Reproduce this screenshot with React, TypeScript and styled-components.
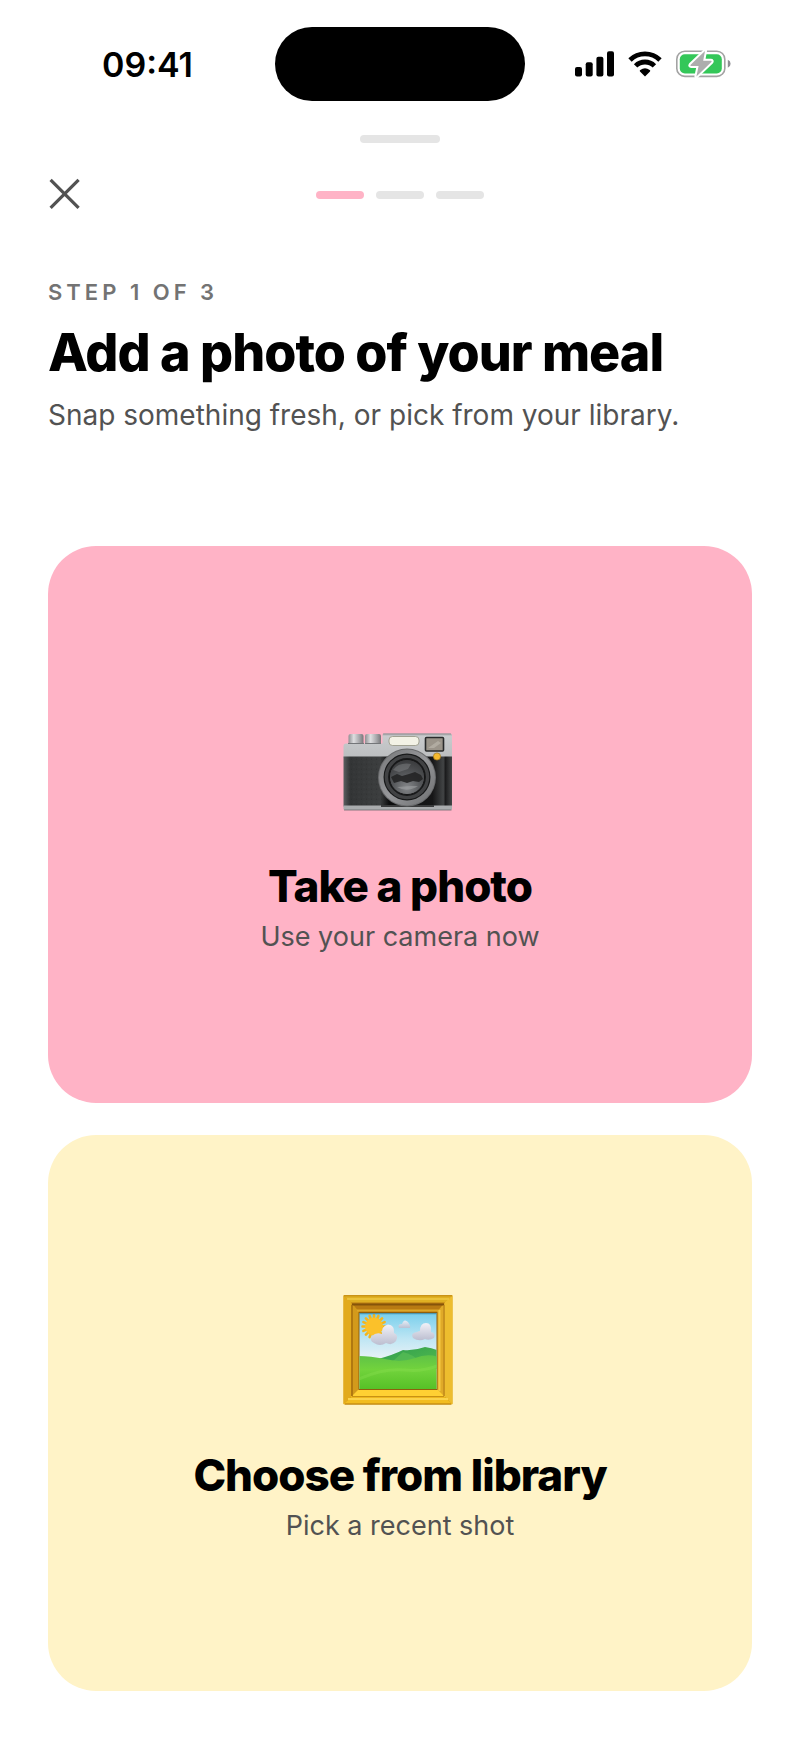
import React from "react";
import styled, { createGlobalStyle } from "styled-components";

const GlobalStyle = createGlobalStyle`
    * {
        box-sizing: border-box;
    }
    body {
        margin: 0;
        background-color: #fff;
        color: #000;
        font-family: Inter, "Liberation Sans", sans-serif;
    }
`;
const Screen = styled.div`
    display: flex;
    flex-direction: column;
    min-height: 100vh;
    padding: 27px 0 48px;
`;
const StatusBar = styled.div`
    display: grid;
    grid-template-columns: 1fr 250px 1fr;
    align-items: center;
    justify-items: center;
    padding: 0 20px;
`;
const Time = styled.time`
    padding-top: 2px;
    font-size: 34px;
    line-height: 40px;
    font-weight: 600;
`;
const Island = styled.div`
    width: 250px;
    height: 74px;
    border-radius: 37px;
    background-color: #000;
`;
const StatusIcons = styled.div`
    display: flex;
    align-items: center;
    gap: 14px;
    svg {
        display: block;
    }
`;
const Handle = styled.div`
    width: 80px;
    height: 8px;
    margin: 34px auto 35px;
    border-radius: 4px;
    background-color: #e5e5e5;
`;
const NavBar = styled.nav`
    display: grid;
    grid-template-columns: 1fr auto 1fr;
    align-items: center;
    padding: 0 48px;
`;
const CloseButton = styled.button`
    width: 32px;
    height: 32px;
    padding: 0;
    border: 0;
    background: none;
    color: #525252;
    cursor: pointer;
    svg {
        display: block;
    }
`;
const Steps = styled.div`
    display: flex;
    gap: 12px;
    padding-top: 2px;
`;
const StepBar = styled.span<{ $active?: boolean }>`
    width: 48px;
    height: 8px;
    border-radius: 4px;
    background-color: ${(props) => (props.$active ? "#ffb3c6" : "#e5e5e5")};
`;
const Header = styled.header`
    padding: 68px 48px 112px;
`;
const StepLabel = styled.p`
    margin: 0 0 16px;
    font-size: 22px;
    line-height: 28px;
    font-weight: 600;
    letter-spacing: 4px;
    text-transform: uppercase;
    color: #737373;
`;
const Title = styled.h1`
    margin: 0 0 12px;
    font-size: 52px;
    line-height: 62px;
    font-weight: 800;
    letter-spacing: -1px;
`;
const Subtitle = styled.p`
    margin: 0;
    font-size: 28px;
    line-height: 38px;
    color: #525252;
`;
const Options = styled.main`
    flex: 1;
    display: grid;
    grid-auto-rows: 1fr;
    gap: 32px;
    padding: 0 48px;
`;
const Card = styled.button<{ $color: string }>`
    display: flex;
    flex-direction: column;
    align-items: center;
    justify-content: center;
    padding: 48px;
    border: 0;
    border-radius: 48px;
    background-color: ${(props) => props.$color};
    color: #000;
    font-family: inherit;
    cursor: pointer;
`;
const CardIcon = styled.span`
    display: flex;
    align-items: center;
    height: 136px;
    margin-bottom: 31px;
`;
const CardTitle = styled.span`
    margin-bottom: 7px;
    font-size: 44px;
    line-height: 52px;
    font-weight: 800;
    letter-spacing: -1px;
`;
const CardText = styled.span`
    font-size: 27px;
    line-height: 36px;
    color: #525252;
`;

function SignalIcon() {
    return (
        <svg width="39" height="26" viewBox="0 0 39 26" aria-hidden="true">
            <rect x="0" y="16" width="7" height="9.5" rx="2" />
            <rect x="10.7" y="11.3" width="7" height="14.2" rx="2" />
            <rect x="21.4" y="5.7" width="7" height="19.8" rx="2" />
            <rect x="32" y="0.3" width="7" height="25.2" rx="2" />
        </svg>
    );
}

function WifiIcon() {
    return (
        <svg width="34" height="26" viewBox="0 0 34 26" aria-hidden="true">
            <g fill="none" stroke="#000" strokeWidth="4.8">
                <path d="M2 9 A21.5 21.5 0 0 1 32 9" />
                <path d="M7.6 14.9 A13.3 13.3 0 0 1 26.4 14.9" />
            </g>
            <path d="M17 25.4 L12 20.5 Q11.2 19.7 12.3 19 Q17 15.7 21.7 19 Q22.8 19.7 22 20.5 Z" />
        </svg>
    );
}

function BatteryIcon() {
    const bolt = "M29 1 L14.6 14.8 Q13.8 16 15.2 16 L22.6 16 L20.4 26.4 L35.4 12 Q36.2 10.8 34.8 10.8 L27.2 10.8 Z";
    return (
        <svg width="55" height="28" viewBox="0 0 55 28" aria-hidden="true">
            <rect x="0.8" y="1.2" width="48" height="25.2" rx="8" fill="none" stroke="#a3a3a3" strokeWidth="1.6" />
            <rect x="3.8" y="4.2" width="42" height="19.2" rx="5" fill="#34c759" />
            <path d="M51.8 9.8 Q54.6 11 54.6 13.8 Q54.6 16.6 51.8 17.8 Z" fill="#8e8e93" />
            <path d={bolt} fill="#fff" stroke="#fff" strokeWidth="4" strokeLinejoin="round" />
            <path d={bolt} fill="#adadad" />
        </svg>
    );
}

function CloseIcon() {
    return (
        <svg width="32" height="32" viewBox="0 0 32 32" fill="none" stroke="currentColor" strokeWidth="3.2" aria-hidden="true">
            <path d="M2.6 1.8 L30.6 29.8 M30.6 1.8 L2.6 29.8" />
        </svg>
    );
}

function CameraIcon() {
    return (
        <svg width="114" height="110" viewBox="0 0 114 110" aria-hidden="true">
            <defs>
                <linearGradient id="metal" x1="0" y1="0" x2="0" y2="1">
                    <stop offset="0" stopColor="#a9abad" />
                    <stop offset="0.12" stopColor="#c9cbcd" />
                    <stop offset="1" stopColor="#bbbdbf" />
                </linearGradient>
                <linearGradient id="knob" x1="0" y1="0" x2="1" y2="0">
                    <stop offset="0" stopColor="#8f8f92" />
                    <stop offset="0.35" stopColor="#dedee0" />
                    <stop offset="0.7" stopColor="#aaaaad" />
                    <stop offset="1" stopColor="#77777a" />
                </linearGradient>
                <linearGradient id="leather" x1="0" y1="0" x2="1" y2="0">
                    <stop offset="0" stopColor="#5d5f61" />
                    <stop offset="0.06" stopColor="#333536" />
                    <stop offset="0.34" stopColor="#3c3e3f" />
                    <stop offset="0.42" stopColor="#0d0d0e" />
                    <stop offset="0.82" stopColor="#161617" />
                    <stop offset="0.92" stopColor="#424445" />
                    <stop offset="0.94" stopColor="#1c1c1d" />
                    <stop offset="1" stopColor="#454748" />
                </linearGradient>
                <linearGradient id="ring" x1="0" y1="0" x2="1" y2="1">
                    <stop offset="0" stopColor="#77787a" />
                    <stop offset="0.5" stopColor="#96979a" />
                    <stop offset="1" stopColor="#6c6d6f" />
                </linearGradient>
                <radialGradient id="glass" cx="0.5" cy="0.8" r="0.8">
                    <stop offset="0" stopColor="#85878a" />
                    <stop offset="0.5" stopColor="#55575a" />
                    <stop offset="1" stopColor="#38393b" />
                </radialGradient>
                <pattern id="grain" width="5" height="5" patternUnits="userSpaceOnUse">
                    <circle cx="1" cy="1" r="0.6" fill="#4b4d4f" />
                    <circle cx="3.6" cy="3.2" r="0.6" fill="#28292a" />
                </pattern>
            </defs>
            <rect x="5.5" y="28" width="15" height="11" rx="2" fill="url(#knob)" />
            <rect x="22" y="28" width="16" height="11" rx="2" fill="url(#knob)" />
            <path d="M0.5 40 Q0.5 37.5 3 37.5 L39.5 37.5 L39.5 29 Q39.5 27.5 41 27.5 L107 27.5 Q109 27.5 109 29.5 L109 52 L0.5 52 Z" fill="url(#metal)" />
            <path d="M40 28 L108 28" stroke="#8b8d8f" strokeWidth="0.8" />
            <path d="M5 37.5 L21 37.5 M22 37.5 L38 37.5" stroke="#747679" strokeWidth="1" />
            <rect x="0.5" y="50.5" width="108.5" height="50" fill="url(#leather)" />
            <rect x="5" y="51" width="34" height="48" fill="url(#grain)" opacity="0.5" />
            <path d="M0.5 99.5 L109 99.5 L109 102.5 Q109 104 107.5 104 L2 104 Q0.5 104 0.5 102.5 Z" fill="#aaacae" />
            <path d="M1 104 L108.5 104" stroke="#696b6d" strokeWidth="0.8" />
            <path d="M38 99 L91 99 L91 101 L38 101 Z" fill="#3a3b3c" />
            <rect x="46" y="30.5" width="30" height="9" rx="3.5" fill="#f3f2e6" stroke="#939382" strokeWidth="0.8" />
            <rect x="82.5" y="31.5" width="18" height="13.5" rx="1" fill="#9b948a" stroke="#292a2b" strokeWidth="1.6" />
            <path d="M85 42 L95 35 L98 37 L91 42 Z" fill="#c0bab0" opacity="0.6" />
            <circle cx="64" cy="71.5" r="29" fill="#6a6b6d" />
            <circle cx="64" cy="71.5" r="28" fill="url(#ring)" />
            <circle cx="64" cy="71" r="23.5" fill="#18191a" />
            <circle cx="64" cy="71" r="20.6" fill="none" stroke="#414244" strokeWidth="3.4" />
            <circle cx="64" cy="71" r="17.6" fill="url(#glass)" stroke="#151516" strokeWidth="1" />
            <path d="M50 64 Q56 56 68 58 L65 63 L56 66 Z" fill="#85878a" opacity="0.45" />
            <path d="M48 71 L54 68 L59 70 L66 68 L72 66 L78 69 L80 73 L76 76 L70 75 L64 77 L58 75 L51 77 Z" fill="#232425" opacity="0.9" />
            <path d="M54 81 Q64 87 75 80 L68 80 Z" fill="#a5a7aa" opacity="0.5" />
            <circle cx="94" cy="50.5" r="3.6" fill="#f5b92e" stroke="#9f741c" strokeWidth="0.7" />
        </svg>
    );
}

function PictureIcon() {
    return (
        <svg width="114" height="110" viewBox="0 0 114 110" aria-hidden="true">
            <defs>
                <linearGradient id="sky" x1="0" y1="0" x2="0" y2="1">
                    <stop offset="0" stopColor="#72cdeb" />
                    <stop offset="0.35" stopColor="#bfe6f4" />
                    <stop offset="0.6" stopColor="#e9f2f6" />
                </linearGradient>
                <linearGradient id="field" x1="0" y1="0" x2="0" y2="1">
                    <stop offset="0" stopColor="#5fc247" />
                    <stop offset="0.4" stopColor="#72d33c" />
                    <stop offset="1" stopColor="#53bf25" />
                </linearGradient>
                <linearGradient id="hill" x1="0" y1="0" x2="1" y2="1">
                    <stop offset="0" stopColor="#2f9d50" />
                    <stop offset="1" stopColor="#55bd4b" />
                </linearGradient>
                <linearGradient id="cloud" x1="0" y1="0" x2="0" y2="1">
                    <stop offset="0" stopColor="#f1f1f7" />
                    <stop offset="1" stopColor="#bcbed0" />
                </linearGradient>
                <clipPath id="canvas">
                    <rect x="16.5" y="18" width="77" height="76" />
                </clipPath>
            </defs>
            <rect x="0.5" y="0" width="109" height="109.5" rx="1" fill="#d9a217" />
            <path d="M0.5 0.5 H109.5 L101 8 H9 Z" fill="#e0b022" />
            <path d="M0.5 109 H109.5 L100 101 H10 Z" fill="#f2bc20" />
            <path d="M0.5 0.5 L9 8 V101 L0.5 109 Z" fill="#e2aa1c" />
            <path d="M109.5 0.5 L101 8 V101 L109.5 109 Z" fill="#edbd2e" />
            <path d="M1 0.8 H109" stroke="#c08a16" strokeWidth="1" />
            <path d="M2 109 H108" stroke="#b57a0c" strokeWidth="1" />
            <path d="M4 4 H106" stroke="#efc944" strokeWidth="1.6" />
            <path d="M5 104 H105" stroke="#fbd34b" strokeWidth="2" />
            <path d="M8 7.5 H102 L94 17 H16 Z" fill="#b87a12" />
            <path d="M8 7.5 L16 17 V94 L8 102 Z" fill="#d39a1b" />
            <path d="M102 7.5 L94 17 V94 L102 102 Z" fill="#e0aa28" />
            <path d="M8 102 L16 94 H94 L102 102 Z" fill="#ffd033" />
            <path d="M9 9.4 H101" stroke="#85540a" strokeWidth="2" />
            <path d="M14 15.4 H96" stroke="#dda829" strokeWidth="2" />
            <path d="M9 10 V101" stroke="#a8700f" strokeWidth="1.6" />
            <path d="M101 10 V101" stroke="#b98319" strokeWidth="1.2" />
            <path d="M96.5 15 V96" stroke="#f4cb45" strokeWidth="2" />
            <path d="M9 101.6 H101" stroke="#c48a12" strokeWidth="1" />
            <rect x="15.5" y="17" width="79" height="78" fill="#8f600c" />
            <g clipPath="url(#canvas)">
                <rect x="16" y="16" width="80" height="80" fill="url(#sky)" />
                <g stroke="#f3b51d" strokeWidth="2.6" strokeLinecap="round">
                    <path d="M31 20 V43 M19.5 31.5 H42.5 M22.9 23.4 L39.1 39.6 M39.1 23.4 L22.9 39.6 M26.6 20.9 L35.4 42.1 M35.4 20.9 L26.6 42.1 M20.4 27.1 L41.6 35.9 M41.6 27.1 L20.4 35.9" />
                </g>
                <circle cx="31" cy="31.5" r="9" fill="#fbc12a" />
                <path d="M31 48 Q26 46 29 41 Q33 37 39 39 Q38 31 45 29.5 Q52 30 51 38 Q56 40 53 46 Q49 51 43 48 Q37 52 31 48 Z" fill="url(#cloud)" />
                <path d="M56 33 Q54 29 59 29 Q61 23 65 27 Q68 31 67 33 Z" fill="url(#cloud)" opacity="0.9" />
                <path d="M70 43 Q67 38 74 37 Q76 36 77 36 Q77 28 83 28 Q89 28 88 37 Q93 38 91 43 Q86 46 82 44 Q76 47 70 43 Z" fill="url(#cloud)" />
                <path d="M35 64 Q50 60 60 55 Q71 56 82 52 Q90 53 96 56 V74 H35 Z" fill="url(#hill)" />
                <path d="M60 57 Q70 60 74 64 Q62 66 50 66 Z" fill="#58bd55" opacity="0.7" />
                <path d="M16 61 Q27 61 42 64 Q58 68 72 63 Q84 58 96 62 V96 H16 Z" fill="url(#field)" />
                <path d="M16 84 Q40 73 62 75 Q80 77 96 70" fill="none" stroke="#8ae04f" strokeWidth="3" opacity="0.35" />
                <path d="M16 18.5 H96" stroke="#39809b" strokeWidth="1.5" opacity="0.7" />
            </g>
        </svg>
    );
}

const options = [
    { title: "Take a photo", text: "Use your camera now", color: "#ffb3c6", Icon: CameraIcon },
    { title: "Choose from library", text: "Pick a recent shot", color: "#fff3c7", Icon: PictureIcon },
];

function App() {
    return (
        <Screen>
            <GlobalStyle />
            <StatusBar>
                <Time>09:41</Time>
                <Island />
                <StatusIcons>
                    <SignalIcon />
                    <WifiIcon />
                    <BatteryIcon />
                </StatusIcons>
            </StatusBar>
            <Handle />
            <NavBar>
                <CloseButton type="button" aria-label="Close">
                    <CloseIcon />
                </CloseButton>
                <Steps>
                    <StepBar $active />
                    <StepBar />
                    <StepBar />
                </Steps>
            </NavBar>
            <Header>
                <StepLabel>Step 1 of 3</StepLabel>
                <Title>Add a photo of your meal</Title>
                <Subtitle>Snap something fresh, or pick from your library.</Subtitle>
            </Header>
            <Options>
                {
                    options.map(({ title, text, color, Icon }) =>
                        <Card key={title} type="button" $color={color}>
                            <CardIcon>
                                <Icon />
                            </CardIcon>
                            <CardTitle>{title}</CardTitle>
                            <CardText>{text}</CardText>
                        </Card>
                    )
                }
            </Options>
        </Screen>
    );
}

export default App;
